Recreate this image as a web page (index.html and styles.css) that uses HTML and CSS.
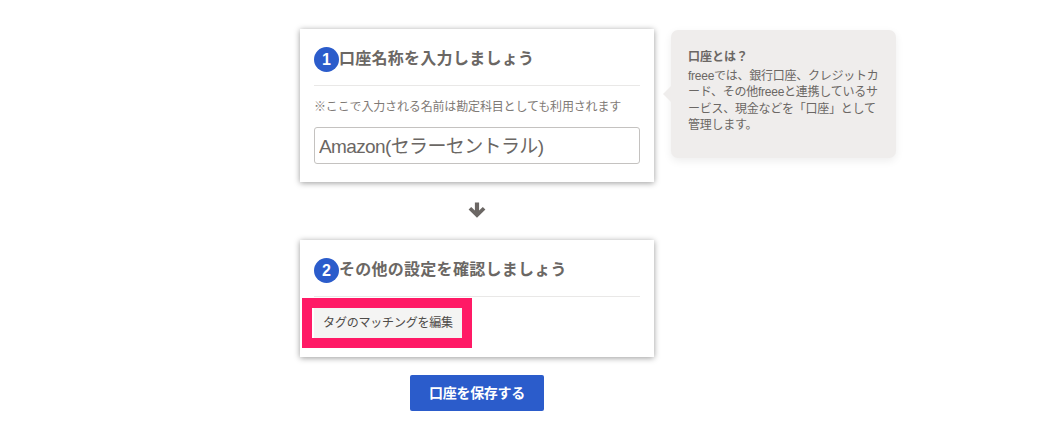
FILE: index.html
```html
<!DOCTYPE html>
<html lang="ja">
<head>
<meta charset="utf-8">
<title>口座名称</title>
<link rel="stylesheet" href="styles.css">
</head>
<body>
<div class="page">
  <main class="steps">
    <section class="card card-first">
      <h2 class="card-title"><span class="num">1</span>口座名称を入力しましょう</h2>
      <p class="note">※ここで入力される名前は勘定科目としても利用されます</p>
      <input class="name-input" type="text" value="Amazon(セラーセントラル)">
    </section>
    <div class="arrow">
      <svg width="18" height="16" viewBox="0 0 18 16"><path d="M9 15.7 L0.6 7.6 L3.2 5 L6.9 8.6 V0.4 H11.1 V8.6 L14.8 5 L17.4 7.6 Z" fill="#6b6764"/></svg>
    </div>
    <section class="card card-second">
      <h2 class="card-title"><span class="num">2</span>その他の設定を確認しましょう</h2>
      <div class="highlight"><button class="tag-button" type="button">タグのマッチングを編集</button></div>
    </section>
    <button class="save" type="button">口座を保存する</button>
  </main>
  <aside class="bubble">
    <h3 class="bubble-title">口座とは？</h3>
    <p class="bubble-text">freeeでは、銀行口座、クレジットカード、その他freeeと連携しているサービス、現金などを「口座」として管理します。</p>
  </aside>
</div>
</body>
</html>
```
FILE: styles.css
```css
* { box-sizing: border-box; }
html, body { margin: 0; padding: 0; background: #fff; }
body {
  width: 1050px;
  height: 445px;
  overflow: hidden;
  color: #6b6764;
  font-family: "Liberation Sans", "Noto Sans CJK JP", sans-serif;
}
.page {
  display: flex;
  align-items: flex-start;
  gap: 17px;
  padding: 29px 0 0 300px;
}
.steps {
  width: 354px;
  display: flex;
  flex-direction: column;
}
.card {
  background: #fff;
  box-shadow: 0 1px 6px rgba(0, 0, 0, .4);
  padding: 14px 14px 0;
}
.card-first { height: 153px; }
.card-second { height: 117px; }
.card-title {
  display: flex;
  align-items: center;
  margin: 0;
  height: 43px;
  padding-bottom: 10px;
  border-bottom: 1px solid #e9e8e7;
  font-size: 16px;
  line-height: 24px;
  font-weight: 700;
  letter-spacing: .27px;
  color: #6b6764;
}
.num {
  flex: none;
  width: 25px;
  height: 25px;
  border-radius: 50%;
  background: #2b5ccb;
  color: #fff;
  font-size: 16px;
  line-height: 25px;
  letter-spacing: 0;
  text-align: center;
}
.note {
  margin: 0;
  padding-top: 12px;
  font-size: 12px;
  line-height: 18px;
  letter-spacing: -.15px;
  color: #7f7a76;
}
.name-input {
  display: block;
  width: 326px;
  height: 37px;
  margin-top: 11px;
  padding: 0 4px 3px;
  border: 1px solid #c4c2c0;
  border-radius: 3px;
  background: #fff;
  color: #6b6764;
  letter-spacing: -.62px;
  font: 19px/32px "Liberation Sans", "Noto Sans CJK JP", sans-serif;
}
.arrow {
  height: 58px;
  padding-bottom: 3px;
  display: flex;
  align-items: center;
  justify-content: center;
}
.highlight {
  width: 170px;
  height: 50px;
  margin: 1px 0 0 -12px;
  border: 10px solid #ff1a66;
  background: #fff;
}
.tag-button {
  display: block;
  width: 150px;
  height: 30px;
  padding: 0;
  border: 0;
  border-left: 2px solid #fff;
  background: #f4f4f3;
  color: #4e4b49;
  font: 12px/30px "Liberation Sans", "Noto Sans CJK JP", sans-serif;
  letter-spacing: -.2px;
}
.save {
  align-self: center;
  width: 134px;
  height: 36px;
  margin-top: 18px;
  padding: 0;
  border: 0;
  border-radius: 2px;
  background: #2b5ccb;
  color: #fff;
  font: 700 14px/36px "Liberation Sans", "Noto Sans CJK JP", sans-serif;
  letter-spacing: -.3px;
}
.bubble {
  position: relative;
  width: 225px;
  height: 128px;
  margin-top: 1px;
  padding: 19px 15px 0 17px;
  border-radius: 7px;
  background: #efedec;
  box-shadow: 0 3px 8px rgba(0, 0, 0, .07);
}
.bubble::before {
  content: "";
  position: absolute;
  left: -8px;
  top: 56px;
  border-style: solid;
  border-width: 8px 8px 8px 0;
  border-color: transparent #efedec transparent transparent;
}
.bubble-title {
  margin: 0;
  font-size: 12px;
  line-height: 16px;
  font-weight: 700;
  color: #6b6764;
}
.bubble-text {
  margin: 3px 0 0;
  font-size: 12px;
  line-height: 16.3px;
  letter-spacing: -.25px;
  line-break: anywhere;
  color: #6b6764;
}
```
